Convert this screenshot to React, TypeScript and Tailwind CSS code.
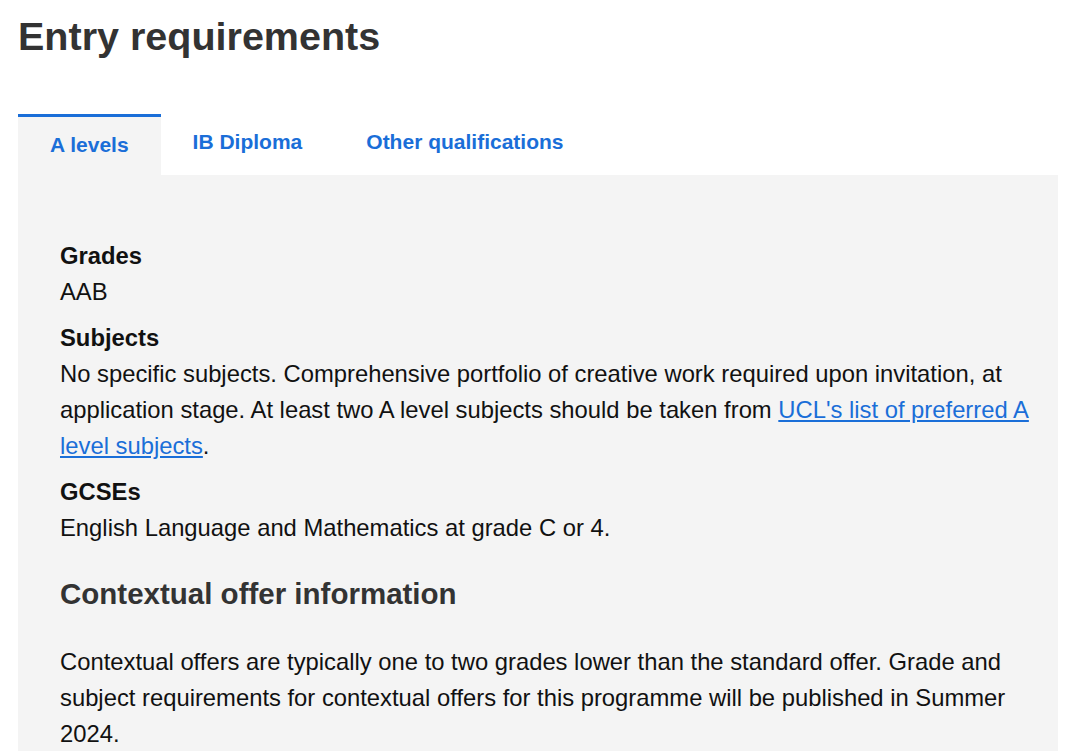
const tabs = ["A levels", "IB Diploma", "Other qualifications"];

export default function App() {
  return (
    <div className="min-h-screen bg-white font-['Liberation_Sans',Arial,sans-serif] text-[#111]">
      <div className="pl-[18px] pr-[22px]">
        <h1 className="pt-[14px] text-[39.5px] font-bold leading-[44px] text-[#333]">Entry requirements</h1>

        <div className="mt-[56px] flex items-start">
          {tabs.map((t, i) =>
            i === 0 ? (
              <div
                key={t}
                className="h-[61px] border-t-[3px] border-[#1a6ed8] bg-[#f4f4f4] px-8 pt-[16px] text-[21px] font-bold leading-[24px] text-[#1a6ed8]"
              >
                {t}
              </div>
            ) : (
              <div key={t} className="px-8 pt-[16px] text-[21px] font-bold leading-[24px] text-[#1a6ed8]">
                {t}
              </div>
            )
          )}
        </div>

        <div className="bg-[#f4f4f4] pl-[42px] pr-[14px] pt-[63px] pb-8 text-[23.8px] leading-[36px]">
          <h4 className="font-bold">Grades</h4>
          <p>AAB</p>
          <h4 className="mt-[10px] font-bold">Subjects</h4>
          <p>
            No specific subjects. Comprehensive portfolio of creative work required upon invitation, at application
            stage. At least two A level subjects should be taken from{" "}
            <a href="#" className="text-[#1a6ed8] underline underline-offset-2">
              UCL's list of preferred A level subjects
            </a>
            .
          </p>
          <h4 className="mt-[10px] font-bold">GCSEs</h4>
          <p>English Language and Mathematics at grade C or 4.</p>
          <h3 className="mt-[30px] text-[29.5px] font-bold leading-[36px] text-[#333]">Contextual offer information</h3>
          <p className="mt-[32px]">
            Contextual offers are typically one to two grades lower than the standard offer. Grade and subject
            requirements for contextual offers for this programme will be published in Summer 2024.
          </p>
        </div>
      </div>
    </div>
  );
}
